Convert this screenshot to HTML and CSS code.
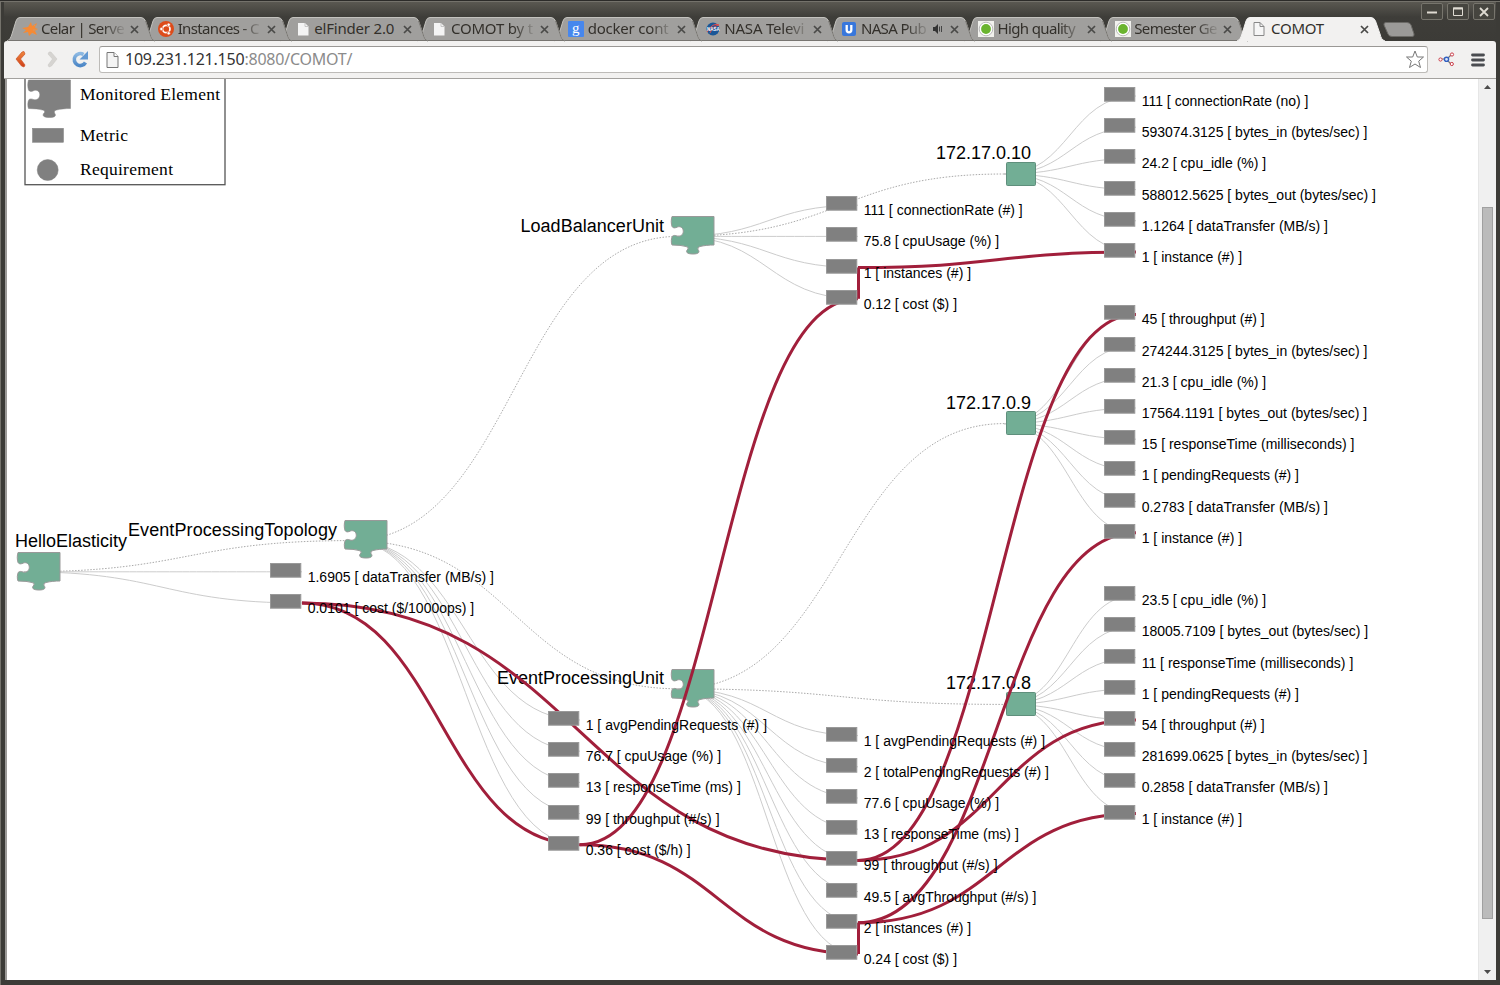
FILE: index.html
```html
<!DOCTYPE html>
<html lang="en">
<head>
<meta charset="utf-8">
<title>COMOT</title>
<link rel="stylesheet" href="styles.css">
</head>
<body>
<div class="window">
  <header class="titlebar">
    <nav class="tabs" id="tabs"></nav>
    <svg class="new-tab" width="32" height="15" viewBox="0 0 32 15"><path d="M3 .5H24Q27 .5 28 3L31 12Q31.500 14.500 29 14.500H9Q6 14.500 5 12L1 3Q.5.5 3 .5Z" fill="#9b9a98" stroke="#6b6a66"/></svg>
    <div class="window-buttons">
      <button class="win-btn"><svg width="20" height="15"><path d="M5 8.500H15" stroke="#dfdbd2" stroke-width="2"/></svg></button>
      <button class="win-btn"><svg width="20" height="15"><path d="M5.500 4H14.500V11.500H5.500Z" fill="none" stroke="#dfdbd2"/><path d="M5 4.500H15" stroke="#dfdbd2" stroke-width="2"/></svg></button>
      <button class="win-btn"><svg width="20" height="15"><path d="M6 4L14 12M14 4L6 12" stroke="#dfdbd2" stroke-width="1.800"/></svg></button>
    </div>
  </header>
  <div class="toolbar">
    <svg class="nav-icons" width="88" height="36" viewBox="0 0 88 36">
      <defs>
        <linearGradient id="back" x2="0" y2="1"><stop stop-color="#f0883f"/><stop offset="1" stop-color="#cf3d16"/></linearGradient>
        <linearGradient id="reload" x2="0" y2="1"><stop stop-color="#8cb8e2"/><stop offset="1" stop-color="#4e88c7"/></linearGradient>
      </defs>
      <path d="M19 9.500L20 12L15.500 17L20 23L19 25L16.500 24L11 17L17 10Z" fill="url(#back)" stroke="#cc5527" stroke-width=".7"/>
      <path d="M44 10L43 12L47.500 17L43 23L44 25L46.500 24L52 17L46 10Z" fill="#d6d4d1" stroke="#c9c6c3" stroke-width=".5"/>
      <path d="M78.500 12.500A6 6 0 1 0 80.500 20.500" fill="none" stroke="url(#reload)" stroke-width="3.600"/>
      <path d="M83 9V17.500H74.500Z" fill="#6499d2"/>
    </svg>
    <div class="omnibox">
      <svg width="13" height="16" viewBox="0 0 13 16"><path d="M1 .5H8L12 4.500V15.500H1Z" fill="#f4f4f4" stroke="#777"/><path d="M8 .5V4.500H12" fill="#fff" stroke="#777"/></svg>
      <span class="url"><b>109.231.121.150</b>:8080/COMOT/</span>
      <svg class="star" width="20" height="19" viewBox="0 0 20 19"><path d="M10 1L12.300 7H18.500L13.700 11.200L15.500 17.500L10 14L4.500 17.500L6.300 11.200L1.500 7H7.700Z" fill="#fff" stroke="#777" stroke-linejoin="round"/></svg>
    </div>
    <svg class="ext" width="17" height="15" viewBox="0 0 17 15"><path d="M4 7H7M10 6L13 3M10 9L13 12" stroke="#777" stroke-width="1.200"/><circle cx="2.500" cy="7.500" r="1.600" fill="#fff" stroke="#cb3d49"/><circle cx="8.500" cy="7.300" r="2.100" fill="#dce8fa" stroke="#315fc0" stroke-width="1.400"/><circle cx="14" cy="2.500" r="1.600" fill="#fff" stroke="#cb3d49"/><circle cx="13.800" cy="12" r="1.600" fill="#fff" stroke="#cb3d49"/></svg>
    <svg class="menu" width="14" height="14" viewBox="0 0 14 14"><path d="M1.500 2H12.500M1.500 7H12.500M1.500 12H12.500" stroke="#4a4c50" stroke-width="2.800" stroke-linecap="round"/></svg>
  </div>
  <main class="page">
    <svg class="graph" id="graph" width="1471" height="901" viewBox="7 79 1471 901"></svg>
    <div class="scrollbar">
      <svg width="9" height="5" viewBox="0 0 9 5"><path d="M1 5L4.500 1L8 5Z" fill="#4c4c4c"/></svg>
      <div class="track"><div class="thumb"></div></div>
      <svg width="9" height="5" viewBox="0 0 9 5"><path d="M1 0L4.500 4L8 0Z" fill="#4c4c4c"/></svg>
    </div>
  </main>
</div>
<script src="app.js"></script>
</body>
</html>
```
FILE: styles.css
```css
* { box-sizing: border-box; }
body { margin: 0; background: #3c3b37; overflow: hidden; }
.window {
  width: 1500px; height: 985px;
  display: flex; flex-direction: column;
  padding: 0 4px 5px 4px;
  background: #3c3b37;
  border-top: 1px solid #2c2b29;
  box-shadow: inset 1px 1px 0 #74726b;
}
.titlebar {
  height: 40px; flex: none;
  display: flex; align-items: flex-end;
  padding-left: 4px;
  background: linear-gradient(#5a5851 0, #3e3d39 15px, #3c3b37 40px);
  border-top: 1px solid #74726b;
  font-family: "Noto Sans", "Open Sans", sans-serif;
}
.tabs { display: flex; width: 1370px; flex: none; }
.tab { flex: 0 0 136.67px; height: 24px; display: grid; position: relative; }
.tab > * { grid-area: 1 / 1; }
.tab-shape { overflow: visible; }
.tab-body { display: flex; align-items: center; padding-left: 13.5px; z-index: 1; }
.tab-icon { flex: none; width: 16px; height: 16px; }
.tab-title {
  margin-left: 3.5px; width: 83px; height: 22px; line-height: 21px;
  font-size: 15px; letter-spacing: -0.2px; color: #33302b;
  white-space: nowrap;
}
.tab-title.fade {
  -webkit-mask-image: linear-gradient(90deg, #000 62px, transparent 86px);
  mask-image: linear-gradient(90deg, #000 62px, transparent 86px);
}
.tab-title.tight { letter-spacing: -0.65px; }
.tab-title.short {
  width: 67px;
  -webkit-mask-image: linear-gradient(90deg, #000 44px, transparent 70px);
  mask-image: linear-gradient(90deg, #000 44px, transparent 70px);
}
.tab-sound { flex: none; margin-left: 4px; }
.tab-close { flex: none; margin-left: 6px; }
.new-tab { flex: none; margin: 0 0 4px 5px; }
.window-buttons { display: flex; gap: 4px; align-self: flex-start; margin: 1px 0 0 6px; }
.win-btn {
  width: 22px; height: 17px; padding: 0; display: flex;
  background: #46453f; border: 1px solid #77756d; border-radius: 2px;
}
.win-btn svg { flex: none; }
.toolbar {
  height: 38px; flex: none; display: flex; align-items: center;
  background: #f2f1f0; border-bottom: 1px solid #a3a19e;
  border-radius: 3px 3px 0 0;
}
.nav-icons { margin-left: 1px; flex: none; margin-top: 1px; }
.omnibox {
  margin-left: 6px; width: 1329px; height: 27px; flex: none;
  display: flex; align-items: center; padding: 0 2px 0 6px;
  background: #fff; border: 1px solid #bdbbb8; border-top-color: #9a9895; border-radius: 3px;
}
.url { margin: -2px 0 0 6px; font: 16px/24px "Noto Sans", "Open Sans", sans-serif; letter-spacing: -0.22px; color: #8b8b8b; }
.url b { font-weight: 400; color: #333; }
.star { margin-left: auto; }
.ext { margin-left: 10px; }
.menu { margin-left: 16px; }
.page {
  flex: 1; min-height: 0; display: flex; background: #fff;
  margin-left: 1px; border-left: 2px solid #9c9a98;
}
.graph { flex: none; }
.scrollbar {
  width: 18px; flex: none; display: flex; flex-direction: column; align-items: center;
  background: #f0f0f0; border-left: 1px solid #e6e6e6; padding: 5px 0 5px;
}
.scrollbar svg { flex: none; }
.track { flex: 1; width: 11px; padding-top: 118px; }
.thumb { height: 712px; background: #bbb; border: 1px solid #a0a0a0; }
.metric-text { font: 14px "Liberation Sans", Arial, sans-serif; fill: #000; }
.service-text { font: 18px "Liberation Sans", Arial, sans-serif; fill: #000; }
.legend-text { font: 17.500px "Liberation Serif", "Times New Roman", serif; fill: #000; }
.legend-frame { fill: none; stroke: #555; stroke-width: 1.3; }
.link { fill: none; stroke: #ccc; stroke-width: 1; }
.dotted { stroke: #aaa; stroke-dasharray: 1.5 1.5; }
.relation { fill: none; stroke: #a11f3b; stroke-width: 3; }
.metric { fill: #808080; stroke: #999; stroke-width: 1; }
.service { fill: #72ae95; stroke: #999; stroke-width: 1; }
.vm { fill: #72ae95; stroke: #5f8f7c; stroke-width: 1; }
.legend-icon { fill: #808080; stroke: #808080; stroke-width: .5; }
```
FILE: app.js
```js
const page = '<path d="M3 2H10L13.500 5.500V14.500H3Z" fill="#f4f4f4"/><path d="M10 2V5.500H13.500" fill="none" stroke="#bbb" stroke-width=".8"/>';
const green = '<path d="M0 0H16V16H0Z" fill="#f2f2ee"/><circle cx="8" cy="8" r="6.800" fill="#fff" stroke="#aaa" stroke-width=".8"/><circle cx="8" cy="8" r="4.900" fill="#6ab42f"/>';
const tabs = [
  ['Celar | Serve', '<path d="M0 7L6 6L9 1L10 5L15 2L13 7L16 8L13 10L15 14L10 12L7 15L6 11L1 12L4 9Z" fill="#f58a35"/><path d="M12 4L15 6M11 9H16M10 12L13 14" stroke="#b9a18b" stroke-width=".7"/>', 'fade tight'],
  ['Instances - C', '<circle cx="8" cy="8" r="8" fill="#dd4b1a"/><circle cx="8.300" cy="8" r="3.700" fill="none" stroke="#fff" stroke-width="1.700"/><g fill="#fff" stroke="#dd4b1a" stroke-width=".7"><circle cx="3.400" cy="8" r="1.700"/><circle cx="10.700" cy="3.700" r="1.700"/><circle cx="10.700" cy="12.300" r="1.700"/></g>', 'fade tight'],
  ['elFinder 2.0', page],
  ['COMOT by t', page, 'fade'],
  ['docker cont', '<rect width="16" height="16" rx="1" fill="#4787ed"/><text x="4" y="12" font-family="Liberation Serif" font-size="15" fill="#fff">g</text>', 'fade'],
  ['NASA Televi', '<circle cx="8" cy="8" r="6.500" fill="#1b5797"/><path d="M2 11Q8 1 14 4Q8 5 5 12" fill="none" stroke="#e34a4a"/><text x="2" y="10" font-family="Liberation Sans" font-weight="700" font-size="4.500" fill="#fff">NASA</text>', 'fade'],
  ['NASA Pub', '<rect x="1" y="1" width="14" height="14" rx="2" fill="#3877dc"/><path d="M5.700 4V9Q5.700 11.300 8 11.300T10.300 9V4" fill="none" stroke="#fff" stroke-width="2.300"/>', 'short tight'],
  ['High quality', green, 'fade tight'],
  ['Semester Ge', green, 'fade tight'],
  ['COMOT', '<path d="M3 1.500H9L13 5.500V14.500H3Z" fill="#f6f6f6" stroke="#888"/><path d="M9 1.500V5.500H13" fill="none" stroke="#888"/>']
];
document.getElementById('tabs').innerHTML = tabs.map(([title, icon, kind = ''], i) => {
  const on = i === tabs.length - 1;
  const sound = kind.includes('short');
  return `<div class="tab" style="z-index:${on ? 20 : 10 - i}">
    <svg class="tab-shape" width="136" height="24"><path d="M-1 24C2 23 3 20 4 17L8 4Q9 .5 12 .5H133Q136 .5 137.500 4L142 17C143 21 144 23 147 24" fill="${on ? '#f2f1f0' : '#a09f9d'}" stroke="${on ? '#f2f1f0' : '#c3c2be'}" stroke-width="1"/>${on ? '' : '<path d="M0 23.500H146" stroke="#777571"/><path d="M137.500 4L142 17C143 21 144 23 147 24" fill="none" stroke="#777571"/>'}</svg>
    <div class="tab-body"><svg class="tab-icon" viewBox="0 0 16 16">${icon}</svg>
    <span class="tab-title ${kind}">${title}</span>
    ${sound ? '<svg class="tab-sound" width="12" height="12" viewBox="0 0 12 12"><path d="M1 4H3L6 1V11L3 8H1Z" fill="#333"/><path d="M7.500 3.500V8.500M9.500 3V9" stroke="#444"/></svg>' : ''}
    <svg class="tab-close" width="9" height="9"><path d="M1 1L8 8M8 1L1 8" stroke="#4a4a48" stroke-width="1.700"/></svg></div>
  </div>`;
}).join('');

const STEP = 31.2;
const TOP = 96;
const row = n => TOP + n * STEP;
const curve = (x1, y1, x2, y2) => `M${x1} ${y1}C${(x1 + x2) / 2} ${y1} ${(x1 + x2) / 2} ${y2} ${x2} ${y2}`;
const piece = 'M1 0H43V28.500C38 28.500 33 29 29 30Q26 30.500 27 33C29 35.500 28 37.500 22 37.500C16 37.500 14 35.500 17 32.500Q18 30.500 15 30Q10 28.500 1 28.500C0 26 0 22 1.500 19.500C3 18.500 4.500 19 6 19.500C9 20.500 12.300 18.500 12.300 14.700C12.300 11 9 9.500 6.500 10.500C4.500 11.500 2 12 1 10C0 7 0 3 1 0Z';

const services = [
  { name: 'HelloElasticity', x: 24, r: 15.25, tx: 15, w: 112, ty: 547, first: 15.25,
    metrics: ['1.6905 [ dataTransfer (MB/s) ]', '0.0101 [ cost ($/1000ops) ]'] },
  { name: 'EventProcessingTopology', x: 351, r: 14.25, tx: 128, w: 209, ty: 536, first: 20,
    metrics: ['1 [ avgPendingRequests (#) ]', '76.7 [ cpuUsage (%) ]', '13 [ responseTime (ms) ]', '99 [ throughput (#/s) ]', '0.36 [ cost ($/h) ]'] },
  { name: 'LoadBalancerUnit', x: 678, r: 4.5, tx: 520.5, w: 143.5, ty: 232, first: 3.5,
    metrics: ['111 [ connectionRate (#) ]', '75.8 [ cpuUsage (%) ]', '1 [ instances (#) ]', '0.12 [ cost ($) ]'] },
  { name: 'EventProcessingUnit', x: 678, r: 19, tx: 497, w: 167, ty: 684, first: 20.5,
    metrics: ['1 [ avgPendingRequests (#) ]', '2 [ totalPendingRequests (#) ]', '77.6 [ cpuUsage (%) ]', '13 [ responseTime (ms) ]', '99 [ throughput (#/s) ]', '49.5 [ avgThroughput (#/s) ]', '2 [ instances (#) ]', '0.24 [ cost ($) ]'] },
  { name: '172.17.0.10', vm: true, x: 1004, r: 2.5, tx: 936, w: 95, ty: 159, first: 0,
    metrics: ['111 [ connectionRate (no) ]', '593074.3125 [ bytes_in (bytes/sec) ]', '24.2 [ cpu_idle (%) ]', '588012.5625 [ bytes_out (bytes/sec) ]', '1.1264 [ dataTransfer (MB/s) ]', '1 [ instance (#) ]'] },
  { name: '172.17.0.9', vm: true, x: 1004, r: 10.5, tx: 946, w: 85, ty: 409, first: 7,
    metrics: ['45 [ throughput (#) ]', '274244.3125 [ bytes_in (bytes/sec) ]', '21.3 [ cpu_idle (%) ]', '17564.1191 [ bytes_out (bytes/sec) ]', '15 [ responseTime (milliseconds) ]', '1 [ pendingRequests (#) ]', '0.2783 [ dataTransfer (MB/s) ]', '1 [ instance (#) ]'] },
  { name: '172.17.0.8', vm: true, x: 1004, r: 19.5, tx: 946, w: 85, ty: 689, first: 16,
    metrics: ['23.5 [ cpu_idle (%) ]', '18005.7109 [ bytes_out (bytes/sec) ]', '11 [ responseTime (milliseconds) ]', '1 [ pendingRequests (#) ]', '54 [ throughput (#) ]', '281699.0625 [ bytes_in (bytes/sec) ]', '0.2858 [ dataTransfer (MB/s) ]', '1 [ instance (#) ]'] }
];
const metricX = [302, 580, 858, 858, 1136, 1136, 1136];
const children = [[0, 1], [1, 2], [1, 3], [2, 4], [3, 5], [3, 6]];
const relations = [
  [302, 16.25, 580, 24], [302, 16.25, 858, 24.5], [580, 24, 858, 6.5], [580, 24, 858, 27.5],
  [858, 24.5, 1136, 7], [858, 24.5, 1136, 20], [858, 26.5, 1136, 14], [858, 26.5, 1136, 23],
  [858.5, 27.5, 858.5, 26.5], [858.5, 6.5, 858.5, 5.5], [858, 5.5, 1136, 5]
];

let links = '', nodes = '', red = '', metrics = '';
children.forEach(([a, b]) => {
  const s = services[a], t = services[b];
  links += `<path class="link dotted" d="${curve(s.x, row(s.r), t.x, row(t.r))}"/>`;
});
services.forEach((s, i) => {
  const y = row(s.r);
  s.metrics.forEach((label, k) => {
    const my = row(s.first + k), mx = metricX[i];
    links += `<path class="link" d="${curve(s.x, y, mx, my)}"/>`;
    metrics += `<rect class="metric" x="${mx - 31.5}" y="${Math.round(my - 9) + .5}" width="30.300" height="13.700"/><text class="metric-text" x="${mx + 5.7}" y="${Math.round(my + 10)}">${label}</text>`;
  });
  nodes += s.vm
    ? `<rect class="vm" x="1006.500" y="${Math.round(y - 12.3) + .5}" width="29" height="23" rx="1"/>`
    : `<path class="service" transform="translate(${s.x - 7} ${Math.round(y - 20.2) + .5})" d="${piece}"/>`;
  nodes += `<text class="service-text" x="${s.tx}" y="${s.ty}" textLength="${s.w}">${s.name}</text>`;
});
relations.forEach(([x1, r1, x2, r2]) => { red += `<path class="relation" d="${curve(x1, row(r1), x2, row(r2))}"/>`; });

const legend = `<rect class="legend-frame" x="25" y="70" width="200" height="114.700"/>
  <path class="legend-icon" transform="translate(27.500 80)" d="${piece}"/>
  <rect class="legend-icon" x="32.500" y="128.300" width="31" height="14"/>
  <circle class="legend-icon" cx="47.700" cy="170" r="10.500"/>
  <text class="legend-text" x="80" y="100" textLength="140">Monitored Element</text>
  <text class="legend-text" x="80" y="141" textLength="48">Metric</text>
  <text class="legend-text" x="80" y="175" textLength="93">Requirement</text>`;
document.getElementById('graph').innerHTML = legend + links + nodes + red + metrics;
```
